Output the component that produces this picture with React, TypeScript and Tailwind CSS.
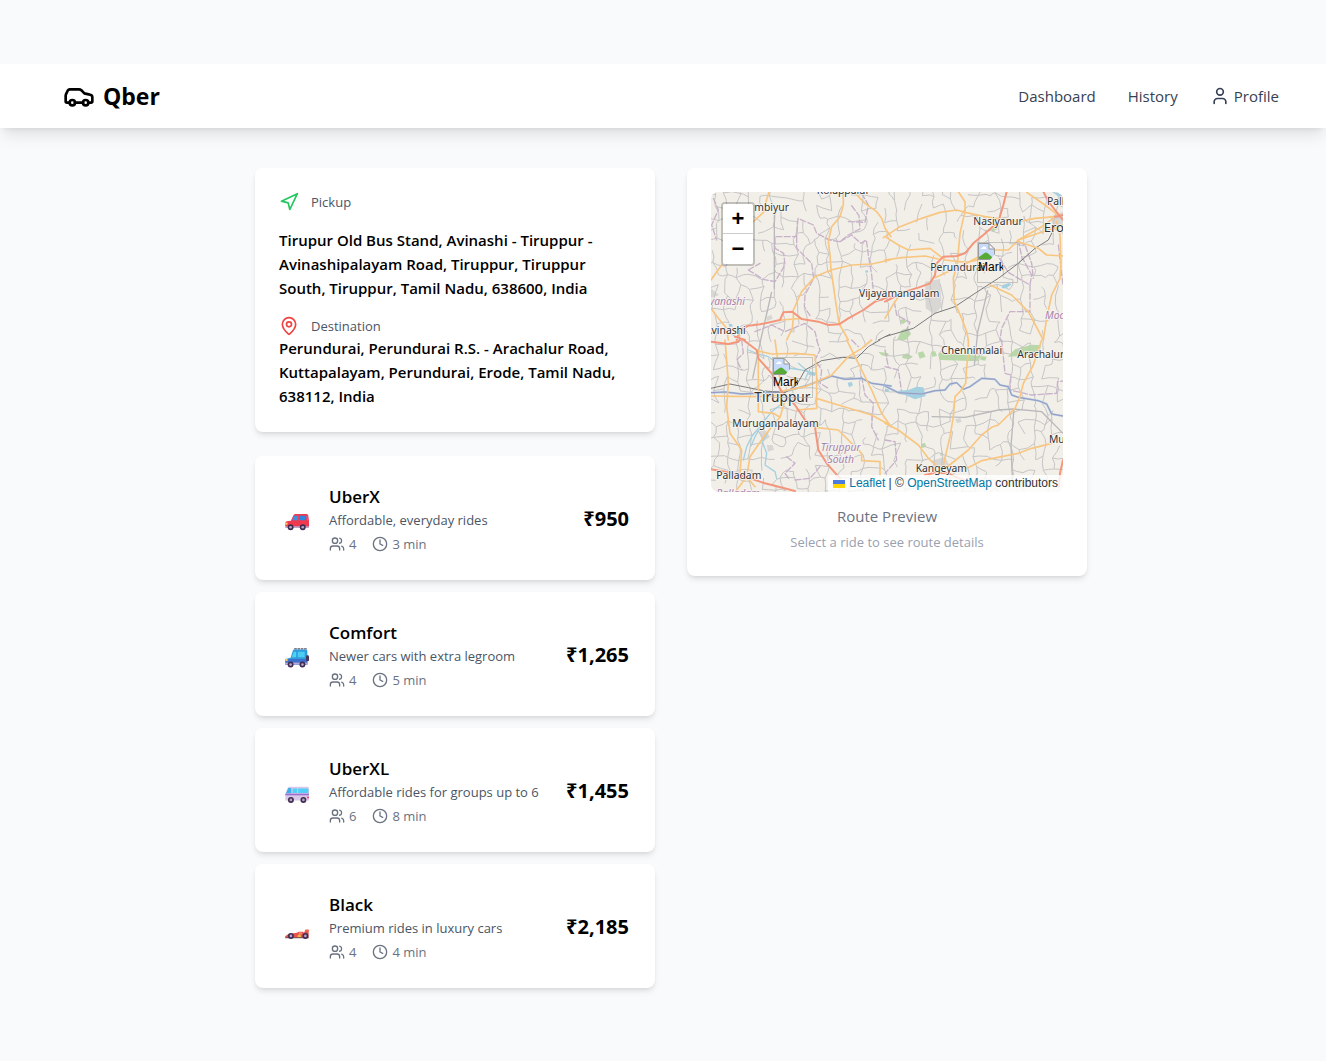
import React, { useState } from 'react';
import { Car, Clock, MapPin, Navigation, User, Users } from 'lucide-react';

type Ride = {
  id: string;
  name: string;
  description: string;
  seats: number;
  minutes: number;
  price: string;
  picture: React.ReactNode;
};

function Wheel({ x, y = 51, r = 8 }: { x: number; y?: number; r?: number }) {
  return (
    <g>
      <circle cx={x} cy={y} r={r} fill="#3f2c4f" />
      <circle cx={x} cy={y} r={r * 0.45} fill="#b8a4c9" />
    </g>
  );
}

const redCar = (
  <>
    <path d="M1 32 Q2 29 6 28 L18 26 L25 11 Q27 6 31 6 H66 Q70 6 71 11 L73 28 V44 Q73 47 69 47 H5 Q1 47 1 43 Z" fill="#f0384f" />
    <path d="M22 25 L28 11 H40 V25 Z" fill="#3f8fe0" />
    <path d="M45 25 V11 H60 L63 25 Z" fill="#2f86e0" />
    <path d="M65 11 H68 L70 25 H67 Z" fill="#5d9be0" />
    <path d="M1 32 H8 V38 H1 Z" fill="#fbd65a" />
    <path d="M1 43 H73 V48 H1 Z" fill="#b9a9c9" />
    <Wheel x={17} y={46} r={9} />
    <Wheel x={54} y={46} r={9} />
  </>
);

const blueCar = (
  <>
    <path d="M28 2 H66" stroke="#5a5462" strokeWidth="4" strokeDasharray="8 2" />
    <path d="M1 33 L17 29 L24 7 Q25 4 28 4 H64 Q68 4 68 9 V50 H1 Z" fill="#2f9cdc" />
    <path d="M1 33 H68 V50 H1 Z" fill="#3c70cf" />
    <path d="M20 28 L27 11 H34 V28 Z" fill="#4fd2f2" />
    <path d="M39 11 H60 V28 H39 Z" fill="#49cdf2" />
    <rect x="64" y="22" width="9" height="18" rx="4" fill="#4a3357" />
    <path d="M1 33 H8 V39 H1 Z" fill="#fbd65a" />
    <path d="M0 44 H69 V50 H0 Z" fill="#b9a9d9" />
    <Wheel x={17} y={50} r={9} />
    <Wheel x={53} y={50} r={9} />
  </>
);

const van = (
  <>
    <path d="M1 30 L9 10 Q10 8 14 8 H69 Q73 8 73 13 V50 H1 Z" fill="#d9c8ea" />
    <path d="M3 28 L10 12 H19 V28 Z" fill="#3fb0ea" />
    <path d="M23 13 H37 V27 H23 Z M40 13 H71 V27 H40 Z" fill="#4fd0f8" />
    <path d="M1 29 H73 V34 H1 Z" fill="#9a6fd0" />
    <path d="M67 38 H73 V43 H67 Z" fill="#ee4463" />
    <Wheel x={18} y={48} r={9} />
    <Wheel x={56} y={48} r={9} />
  </>
);

const raceCar = (
  <>
    <path d="M0 50 L10 42 L36 38 L42 35 H54 L58 38 L62 29 H72 V53 H1 Z" fill="#e8524a" />
    <path d="M42 37 H52 V43 H42 Z" fill="#f08a6a" />
    <path d="M38 47 L46 42 L50 54 H38 Z" fill="#f9b53b" />
    <path d="M62 29 H72 V35 H62 Z" fill="#ef6b50" />
    <path d="M1 52 H72 V55 H1 Z" fill="#6a3a4a" />
    <Wheel x={18} y={48} r={9} />
    <Wheel x={62} y={48} r={9} />
  </>
);

const rides: Ride[] = [
  { id: 'x', name: 'UberX', description: 'Affordable, everyday rides', seats: 4, minutes: 3, price: '₹950', picture: redCar },
  { id: 'comfort', name: 'Comfort', description: 'Newer cars with extra legroom', seats: 4, minutes: 5, price: '₹1,265', picture: blueCar },
  { id: 'xl', name: 'UberXL', description: 'Affordable rides for groups up to 6', seats: 6, minutes: 8, price: '₹1,455', picture: van },
  { id: 'black', name: 'Black', description: 'Premium rides in luxury cars', seats: 4, minutes: 4, price: '₹2,185', picture: raceCar },
];

/* Irregular mesh of minor roads, generated from a fixed seed. */
function minorRoads(): string {
  let seed = 11;
  const random = () => {
    seed = (seed * 16807) % 2147483647;
    return seed / 2147483647;
  };
  const step = 34;
  const columns = 34;
  const rows = 29;
  const points: [number, number][][] = [];
  for (let r = 0; r < rows; r++) {
    points.push([]);
    for (let c = 0; c < columns; c++) {
      points[r].push([
        Math.round(c * step - 20 + (random() - 0.5) * 24),
        Math.round(r * step - 20 + (random() - 0.5) * 24),
      ]);
    }
  }
  const link = (a: [number, number], b: [number, number]) => {
    const mx = Math.round((a[0] + b[0]) / 2 + (random() - 0.5) * 10);
    const my = Math.round((a[1] + b[1]) / 2 + (random() - 0.5) * 10);
    return `M${a[0]} ${a[1]}L${mx} ${my}L${b[0]} ${b[1]}`;
  };
  let d = '';
  for (let r = 0; r < rows - 1; r++) {
    for (let c = 0; c < columns - 1; c++) {
      if (random() < 0.5) d += link(points[r][c], points[r][c + 1]);
      if (random() < 0.66) d += link(points[r][c], points[r + 1][c]);
    }
  }
  return d;
}

const minor = minorRoads();

/* The map is drawn in four sheets: north-west, north-east, south-west, south-east. */
const sheets = [
  {
    transform: 'translate(-18 -21)',
    green: '',
    water: 'M480 258l8-3 2 6-7 3zM70 418l10-2 4 8-10 2z',
    built: 'M18 310l24 20-24 8zM185 395l14-6 4 12-18 8zM256 432l12-4 2 14-14 2z',
    river: '',
    stream: 'M60 440l20 6 14 12',
    border:
      'M130 255L165 235M130 255L175 283 210 290 240 240 236 205 210 190 210 155 275 155 279 100 325 120 335 145 375 165 405 170 430 150 465 132 462 92 440 62M275 155L275 190 320 235 326 280 300 330 298 365 315 392M405 170L440 150 468 175 484 165 490 210 500 270 505 320M25 40L40 75 20 120 35 165M150 440L200 420 240 440 300 415 330 440 336 465M430 110L480 112 490 60 470 25',
    rail: 'M520 465L555 448',
    orange:
      'M192 21L180 60 180 78 145 110M415 20L415 60 405 95 380 125 370 170 375 210 378 255 385 300 392 350 402 415 430 465M555 225L500 237 440 240 378 255 330 275 290 320 265 375 265 400 262 430 245 465M450 24L480 55 515 80 530 100 540 130 558 155M18 285L50 240M18 370L40 400 65 430 70 465M228 405L290 400',
    red: 'M95 465L105 435 130 422 165 418 225 405 235 382 262 380 290 402 340 410 370 420 402 418 430 400 475 375 510 350 555 335M90 455L120 465',
  },
  {
    transform: 'translate(522 -21)',
    green: 'M45 405l12-4 8 8-10 8-10-4zM50 435l20-6 8 18-16 18-26 0zM318 132l16-6 4 6-16 8z',
    water: 'M352 300l20-6 8 4-16 12-14 0zM500 20l20 4 14 10 0 10-20-14z',
    built: 'M120 290L165 282 170 365 148 388 122 370zM496 95L534 80 534 125 505 125z',
    river: '',
    stream: '',
    border:
      'M400 165L410 215 440 270 435 300 400 280 370 262 340 215M435 300L435 380 375 380 350 430 345 465M28 350L35 390 75 412 62 440M400 170L420 180 440 235 445 280M520 180L534 300',
    rail: 'M0 455L85 430 150 385 210 365 270 325 340 280 400 235 450 190 490 165 510 125',
    orange:
      'M-5 158L45 125 110 100 165 82 215 75 240 82 300 95 400 110 450 100 510 95M220 20L240 50 240 80 235 100 225 145 220 200 218 230 205 280 208 350 230 400 245 440 250 465M0 155L40 180 70 195 135 190 180 225 245 232 290 222M0 225L50 218 120 213 160 222M150 278L200 255 245 235 300 205 330 195 370 195 400 165 460 145 534 120M400 170L460 190 485 210 534 213M515 110L525 150 528 230 525 280 500 330 485 400 475 465M315 300L380 330 430 380 475 465M425 22L480 60 525 95M0 400L30 350 50 320M505 100L470 125 400 165',
    red: 'M365 20L355 60 340 110 295 150 265 175 240 205 215 213 175 215 155 235 150 270 135 295 100 308 60 320 0 350M475 20L490 50 534 105M534 90L510 95',
  },
  {
    transform: 'translate(-18 444)',
    green: 'M520 35l30 5 0 10-20-4z',
    water: 'M428 128l12-2 4 10-12 6zM310 96l24 2-4 10-20-4z',
    built: 'M160 275l20-5 15 20-20 15zM185 315l18 0 4 14-18 6z',
    river: 'M18 158L60 156 110 162 200 158 250 152 310 135 350 120 380 108 420 118 470 115 500 130 558 138',
    stream:
      'M225 195L200 215 180 240 160 265 140 290 125 320 115 360M180 240L150 290 138 318M190 275L172 305 185 340 180 375 210 395 215 415M130 30L160 42 190 50 220 72 250 84 290 90 330 100M280 70L310 95 300 120',
    border:
      'M110 0L115 40 95 60 110 90M335 0L345 30 330 60 350 90 345 130 370 145M470 110L480 165 505 190 500 260 520 300M245 350L270 370 240 400 255 420M270 420L315 415 345 380M440 0L460 20',
    rail: 'M18 145L75 132 130 143 180 153 240 158 275 135 300 90 350 62 410 52 455 55 490 20 525 0',
    orange:
      'M155 32L200 42 270 40 330 45 335 110 335 205M425 0L450 50 500 150 530 220 558 260M60 0L65 60 70 130 65 200 75 280 110 330 105 400 125 410M18 168L160 170 240 165M160 30L160 215 205 220 225 232M225 155L300 140 380 105 430 50 470 25 500 0M335 175L400 195 450 210 500 225 555 255M330 262L400 270 440 310 470 340 470 362 525 365 525 410M245 165L225 232 180 285 135 350 125 410 95 450M125 410L150 440M275 210L335 205M210 0L218 60 225 120',
    red: 'M18 5L70 12 100 5 105 0M115 0L155 30 160 55 200 100 230 155 270 195 300 240 330 262 340 330 365 370 405 415M18 388L60 395 120 410 180 430 270 453',
  },
  {
    transform: 'translate(522 444)',
    green:
      'M52 45l14-5 18 10-12 8-20-4zM98 38l16-4 8 16-18 6zM160 38L210 42 285 48 278 64 165 60zM140 35l10-2 6 14-14 4zM285 48l20 2-4 12-14-2zM368 50L390 28 440 14 468 16 465 30 420 48zM110 312l10-4 4 12-12 4zM165 340l6-4 2 10-6 2z',
    water: 'M40 152L70 150 95 140 115 142 120 160 122 168 90 178 60 165 42 162zM0 145l15 5-15 8z',
    built: 'M210 238l16-4 4 12-14 4zM140 362L180 350 195 380 150 385z',
    river:
      'M0 138L40 158 110 162 150 152 180 150 195 132 215 128 235 148 255 140 290 115 330 118 345 135 370 140 380 165 400 172 460 182 485 192 500 222 534 228',
    stream: '',
    border:
      'M0 80L40 90 50 155M350 0L360 100 378 105 375 150 440 165 515 160 518 125 534 123M0 300L30 305 35 360 0 400M0 30L10 80',
    rail: '',
    orange:
      'M250 0L250 40 245 80 242 130 225 155 210 170 205 230 195 290 175 375M470 0L445 75 415 130 405 170 390 205 340 255 320 262 290 285 250 330 190 378M0 250L40 270 100 315 130 355 160 382M240 388L290 362 350 350 400 340 440 325 500 310',
    red: 'M120 405L150 398 190 400 210 410 290 440M534 360L525 400 522 440',
  },
];

function BaseMap() {
  return (
    <svg
      className="block h-full w-full"
      viewBox="0 0 1056 900"
      preserveAspectRatio="xMidYMid slice"
      role="img"
      aria-label="Map of Tiruppur and Perundurai"
    >
      <rect width="1056" height="900" fill="#f2efe9" />
      {sheets.map((s) => (
        <g key={s.transform} transform={s.transform}>
          <path d={s.built} fill="#d9d7d3" />
          <path d={s.green} fill="#b9d8a8" />
        </g>
      ))}
      <path d={minor} fill="none" stroke="#c6c5c6" strokeWidth="3" strokeLinejoin="round" />
      <path
        d="M662 674L762 676 862 654 907 651 992 659 1056 724M830 295L800 420 790 520M909 651L900 760 905 880M182 300L150 440 125 560M190 60L190 290"
        fill="none"
        stroke="#b9b9bb"
        strokeWidth="4"
      />
      {sheets.map((s) => (
        <g key={s.transform} transform={s.transform} fill="none" strokeLinejoin="round" strokeLinecap="round">
          <path d={s.border} stroke="#c8b2ca" strokeWidth="4" strokeDasharray="18 7" />
          <path d={s.stream} stroke="#a5d0e0" strokeWidth="4" />
          <path d={s.water} fill="#a5d0e0" />
          <path d={s.river} stroke="#a9c8dc" strokeWidth="6" />
          <path d={s.river} stroke="#9a98c4" strokeWidth="3" />
          <path d={s.rail} stroke="#7b7b7b" strokeWidth="3" />
          <path d={s.orange} stroke="#f8c681" strokeWidth="5" />
          <path d={s.red} stroke="#f4967c" strokeWidth="6" />
        </g>
      ))}
      <g
        fontFamily="'Noto Sans', 'Open Sans', sans-serif"
        fontSize="31"
        fill="#333"
        stroke="#f7f5f1"
        strokeWidth="5"
        strokeLinejoin="round"
        paintOrder="stroke"
      >
        <text x="397" y="6" textAnchor="middle">Kolappalur</text>
        <text x="130" y="58">mbiyur</text>
        <text x="104" y="426" textAnchor="end">Avinashi</text>
        <text x="444" y="316">Vijayamangalam</text>
        <text x="787" y="98">Nasiyanur</text>
        <text x="1008" y="38">Pallipalayam</text>
        <text x="998" y="120" fontSize="39">Erode</text>
        <text x="658" y="236">Perundurai</text>
        <text x="691" y="486">Chennimalai</text>
        <text x="919" y="498">Arachalur</text>
        <text x="130" y="630" fontSize="41">Tiruppur</text>
        <text x="64" y="706">Muruganpalayam</text>
        <text x="16" y="861">Palladam</text>
        <text x="614" y="839">Kangeyam</text>
        <text x="1014" y="754">Muthur</text>
        <g fill="#a882ab" fontStyle="italic">
          <text x="102" y="338" textAnchor="end">Avanashi</text>
          <text x="1002" y="381">Modakurichi</text>
          <text x="389" y="778" textAnchor="middle">Tiruppur</text>
          <text x="389" y="814" textAnchor="middle">South</text>
          <text x="16" y="914">Palladam</text>
        </g>
      </g>
    </svg>
  );
}

/* Marker whose picture is missing: browser placeholder plus its clipped label. */
function Marker({ className }: { className: string }) {
  return (
    <div className={`absolute h-[41px] w-[41px] border border-[#a8a8a8]/60 ${className}`}>
      <svg className="block" width="17" height="17" viewBox="0 0 17 17" aria-hidden="true">
        <path d="M.5 .5H11L16.5 6V16.5H.5Z" fill="#c7dafa" stroke="#9a9a9a" />
        <path d="M3 6Q2.500 4.500 4.500 4.500Q5 3 6.500 3.500Q8.500 3.500 8.500 6Z" fill="#fff" />
        <path d="M1 16V14L6.500 10Q8 9 9.500 10L14 14V16Z" fill="#55ab36" />
        <path d="M11 .5V6H16.5Z" fill="#f4f4f4" stroke="#9a9a9a" />
        <path d="M12 17L17 11V17H12Z" fill="#f2efe9" />
      </svg>
      <span className="block w-[25px] overflow-hidden font-['Liberation_Sans',sans-serif] text-xs leading-[14px] text-black">
        Mark
      </span>
    </div>
  );
}

function RouteMap() {
  return (
    <div className="relative h-[300px] overflow-hidden rounded-lg bg-[#f2efe9]">
      <BaseMap />
      <Marker className="left-[266px] top-[50px]" />
      <Marker className="left-[61px] top-[165px]" />
      <div className="absolute left-2.5 top-2.5 flex w-[34px] flex-col overflow-hidden rounded border-2 border-black/20 bg-clip-padding font-['Liberation_Sans',sans-serif] text-[22px] font-bold leading-[30px] text-black">
        <button type="button" aria-label="Zoom in" className="h-[30px] border-b border-[#ccc] bg-white">+</button>
        <button type="button" aria-label="Zoom out" className="h-[30px] bg-white">−</button>
      </div>
      <div className="absolute bottom-0 right-0 flex items-center whitespace-pre bg-white/80 px-[5px] font-['Liberation_Sans',sans-serif] text-xs leading-[17px] text-[#333]">
        <a href="#leaflet" className="flex items-center gap-1 text-[#0078a8]">
          <svg width="12" height="8" viewBox="0 0 12 8" aria-hidden="true">
            <path d="M0 0h12v4H0z" fill="#4c7be1" />
            <path d="M0 4h12v4H0z" fill="#ffd500" />
          </svg>
          Leaflet
        </a>
        <span> | © </span>
        <a href="#osm" className="text-[#0078a8]">OpenStreetMap</a>
        <span> contributors</span>
      </div>
    </div>
  );
}

function RideCard({ ride, selected, onSelect }: { ride: Ride; selected: boolean; onSelect: () => void }) {
  return (
    <button
      type="button"
      aria-pressed={selected}
      onClick={onSelect}
      className="flex min-h-[124px] w-full items-center rounded-lg bg-white p-6 text-left shadow-md"
    >
      <span className="flex w-9 shrink-0 justify-center pt-2">
        <svg width="24" height="20" viewBox="0 0 73 60" aria-hidden="true">
          {ride.picture}
        </svg>
      </span>
      <span className="ml-3.5 flex grow flex-col">
        <span className="pt-0.5 text-[17px] font-semibold leading-[26px] text-black">{ride.name}</span>
        <span className="text-[13px] leading-5 text-gray-600">{ride.description}</span>
        <span className="mt-1 flex items-center gap-4 text-[13px] leading-5 text-gray-500">
          <span className="flex items-center gap-1">
            <Users size={16} />
            {ride.seats}
          </span>
          <span className="flex items-center gap-1">
            <Clock size={16} />
            {ride.minutes} min
          </span>
        </span>
      </span>
      <span className="shrink-0 pr-0.5 pt-0.5 text-xl font-bold text-black">{ride.price}</span>
    </button>
  );
}

export default function App() {
  const [selected, setSelected] = useState<string | null>(null);

  return (
    <div className="min-h-screen bg-gray-50 pt-16 font-['Open_Sans','Noto_Sans',sans-serif] text-[15px] leading-6">
      <nav className="flex h-16 items-center justify-between bg-white pl-[63px] pr-[47px] shadow-lg">
        <a href="#home" className="flex items-center gap-2 text-[23px] font-bold leading-8 text-black">
          <Car size={32} />
          Qber
        </a>
        <div className="flex items-center gap-8 text-gray-700">
          <a href="#dashboard">Dashboard</a>
          <a href="#history">History</a>
          <a href="#profile" className="flex items-center gap-1">
            <User size={20} />
            Profile
          </a>
        </div>
      </nav>

      <main className="py-10 pl-4">
        <div className="mx-auto grid max-w-[832px] grid-cols-2 items-start gap-8">
          <div className="flex flex-col gap-6">
            <section className="rounded-lg bg-white p-6 shadow-md">
              <div className="flex items-center gap-3">
                <Navigation size={20} className="text-[#22c55e]" />
                <h2 className="text-[13px] leading-5 text-gray-600">Pickup</h2>
              </div>
              <p className="mt-4 font-semibold text-black">
                Tirupur Old Bus Stand, Avinashi - Tiruppur - Avinashipalayam Road, Tiruppur, Tiruppur South,
                Tiruppur, Tamil Nadu, 638600, India
              </p>
              <div className="mt-4 flex items-center gap-3">
                <MapPin size={20} className="text-[#ef4444]" />
                <h2 className="text-[13px] leading-5 text-gray-600">Destination</h2>
              </div>
              <p className="font-semibold text-black">
                Perundurai, Perundurai R.S. - Arachalur Road, Kuttapalayam, Perundurai, Erode, Tamil Nadu,
                638112, India
              </p>
            </section>

            <div className="flex flex-col gap-3">
              {rides.map((ride) => (
                <RideCard
                  key={ride.id}
                  ride={ride}
                  selected={selected === ride.id}
                  onSelect={() => setSelected(ride.id)}
                />
              ))}
            </div>
          </div>

          <section className="rounded-lg bg-white p-6 text-center shadow-md">
            <RouteMap />
            <p className="mt-3 text-gray-500">Route Preview</p>
            <p className="mt-1 text-[13px] leading-5 text-gray-400">Select a ride to see route details</p>
          </section>
        </div>
      </main>
    </div>
  );
}
